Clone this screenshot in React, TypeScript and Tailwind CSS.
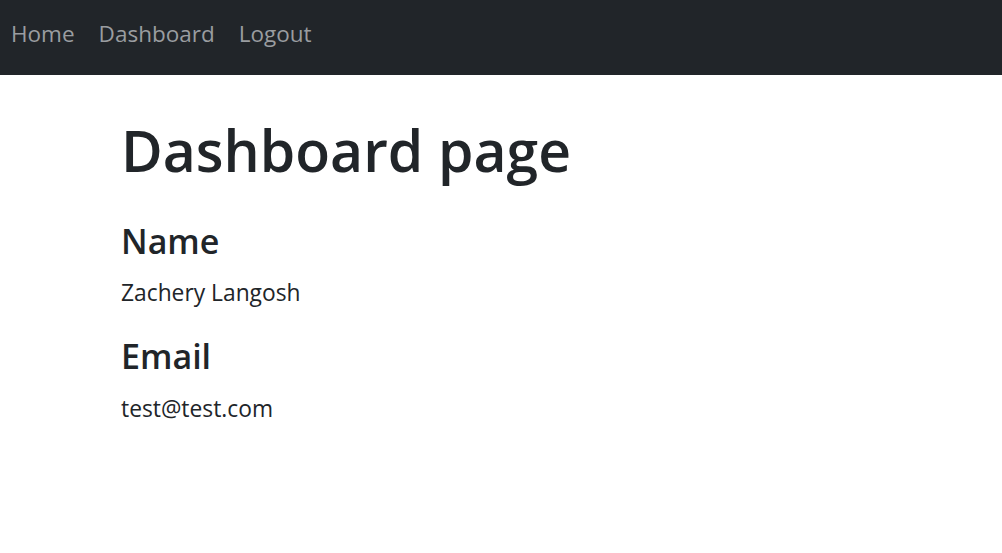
import React from "react";

export default function App() {
  return (
    <div className="min-h-[553px] bg-white" style={{ fontFamily: '"Open Sans", "Noto Sans", sans-serif' }}>
      <nav className="h-[75px] bg-[#212529] flex items-start pt-[16px] pl-[11px] gap-[24px] text-[22.5px] leading-[36px] text-[#9a9da0]">
        <a>Home</a>
        <a>Dashboard</a>
        <a>Logout</a>
      </nav>
      <main className="pl-[121px] text-[#212529]">
        <h1 className="mt-[39px] text-[57px] leading-[72px] font-semibold">Dashboard page</h1>
        <h4 className="mt-[34px] text-[34px] leading-[43px] font-semibold">Name</h4>
        <p className="mt-[12px] text-[22.8px] leading-[36px]">Zachery Langosh</p>
        <h4 className="mt-[24px] text-[34px] leading-[43px] font-semibold">Email</h4>
        <p className="mt-[13px] text-[22.8px] leading-[36px]">test@test.com</p>
      </main>
    </div>
  );
}
